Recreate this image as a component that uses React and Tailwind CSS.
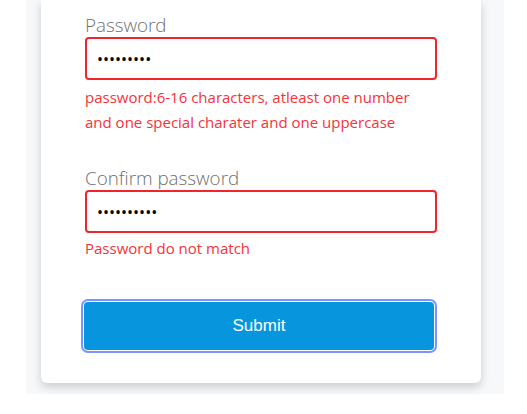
export default function App() {
  return (
    <div className="h-[414px] w-[527px] bg-white" style={{ fontFamily: "'Open Sans', sans-serif" }}>
      <div className="ml-[26px] h-[394px] w-[478px] bg-[#f7f8fa] px-[15px]">
        <div className="h-[383px] w-[440px] rounded-b-[6px] bg-white px-[44px] shadow-[0_4px_10px_rgba(0,0,0,0.18)]">
          <div className="pt-[13px]">
            <label className="block text-[18.8px] font-light leading-[24px] text-[#6f6f6f]">Password</label>
            <input
              type="password"
              defaultValue="abcdefgh1"
              className="block h-[43px] w-[352px] rounded-[4px] border-2 border-[#f2242b] bg-white px-[10px] text-[16px] text-black outline-none"
            />
            <p className="mt-[5px] text-[15px] leading-[25px] text-[#f4333a]">
              password:6-16 characters, atleast one number and one special charater and one uppercase
            </p>
          </div>
          <div className="pt-[31px]">
            <label className="block text-[18.8px] font-light leading-[24px] text-[#6f6f6f]">Confirm password</label>
            <input
              type="password"
              defaultValue="abcdefgh12"
              className="block h-[43px] w-[352px] rounded-[4px] border-2 border-[#f2242b] bg-white px-[10px] text-[16px] text-black outline-none"
            />
            <p className="mt-[3px] text-[15px] leading-[25px] text-[#f4333a]">Password do not match</p>
          </div>
          <button
            type="button"
            className="mt-[41px] -ml-px block h-[48px] w-[350px] rounded-[4px] bg-[#0796dd] text-[17px] text-white ring-2 ring-[#7b93ff] ring-offset-1"
            style={{ fontFamily: "'Liberation Sans', Arial, sans-serif" }}
          >
            Submit
          </button>
        </div>
      </div>
    </div>
  );
}
